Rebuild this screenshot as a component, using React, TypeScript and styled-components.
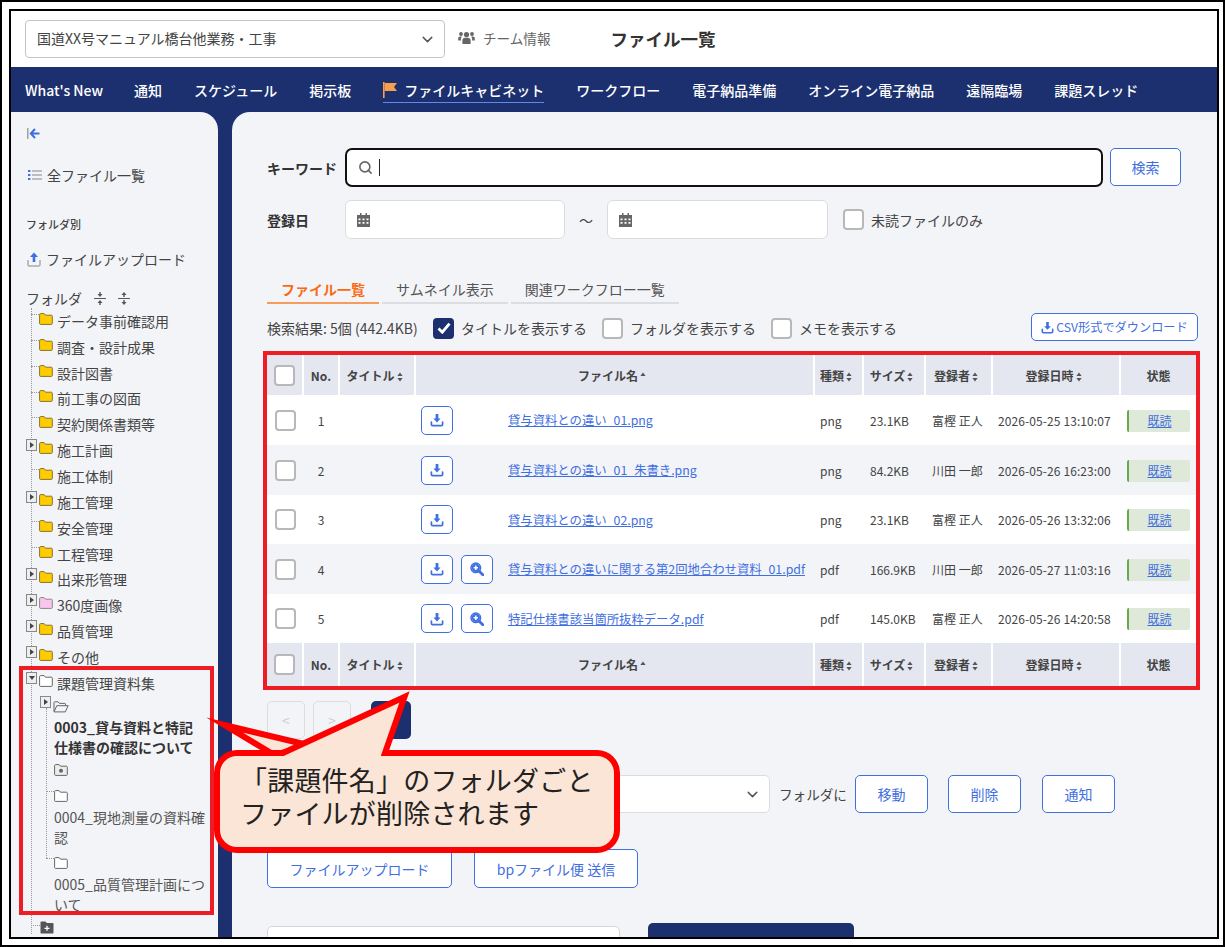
import { FC } from "react";
import styled, { createGlobalStyle } from "styled-components";
import { ChevronDown, Search } from "lucide-react";

const NAVY = "#1c3070";
const BLUE = "#3f6fe0";
const PAGE = "#f3f4f8";
const TEXT = "#444";
const RED = "#ee1c25";

const NAV_ITEMS = ["What's New", "通知", "スケジュール", "掲示板", "ファイルキャビネット", "ワークフロー", "電子納品準備", "オンライン電子納品", "遠隔臨場", "課題スレッド"];

const FOLDERS = [
  { name: "データ事前確認用" },
  { name: "調査・設計成果" },
  { name: "設計図書" },
  { name: "前工事の図面" },
  { name: "契約関係書類等" },
  { name: "施工計画", more: true },
  { name: "施工体制" },
  { name: "施工管理", more: true },
  { name: "安全管理" },
  { name: "工程管理" },
  { name: "出来形管理", more: true },
  { name: "360度画像", more: true, pink: true },
  { name: "品質管理", more: true },
  { name: "その他", more: true },
];

const FILES = [
  { no: 1, name: "貸与資料との違い_01.png", type: "png", size: "23.1KB", user: "富樫 正人", date: "2026-05-25 13:10:07" },
  { no: 2, name: "貸与資料との違い_01_朱書き.png", type: "png", size: "84.2KB", user: "川田 一郎", date: "2026-05-26 16:23:00" },
  { no: 3, name: "貸与資料との違い_02.png", type: "png", size: "23.1KB", user: "富樫 正人", date: "2026-05-26 13:32:06" },
  { no: 4, name: "貸与資料との違いに関する第2回地合わせ資料_01.pdf", type: "pdf", size: "166.9KB", user: "川田 一郎", date: "2026-05-27 11:03:16", zoom: true },
  { no: 5, name: "特記仕様書該当箇所抜粋データ.pdf", type: "pdf", size: "145.0KB", user: "富樫 正人", date: "2026-05-26 14:20:58", zoom: true },
];

const COLUMNS = [36, 36, 76, 399, 49, 62, 67, 128, 76];

const GlobalStyle = createGlobalStyle`
  html, body {
    margin: 0;
    background: #fff;
  }
  * {
    box-sizing: border-box;
  }
  body {
    font-family: "Noto Sans CJK JP", "Noto Sans", sans-serif;
    font-size: 14px;
    color: ${TEXT};
  }
`;

const FolderIcon: FC<{ fill?: string; line?: string }> = ({ fill = "#ffcc00", line = "#85742f" }) => (
  <FolderSvg viewBox="0 0 14 12">
    <path d="M1.5.6h3.6l1.3 1.6h6c.5 0 .9.4.9.9v7.4c0 .5-.4.9-.9.9H1.5c-.5 0-.9-.4-.9-.9V1.5c0-.5.4-.9.9-.9z" fill={fill} stroke={line} strokeWidth="1" />
  </FolderSvg>
);

const OpenFolderIcon: FC = () => (
  <OpenSvg viewBox="0 0 16 12">
    <path d="M1 10.5V1.5c0-.4.3-.7.7-.7h3.4l1.3 1.6h5.4c.4 0 .7.3.7.7v1.6M1 10.9l2.8-6.2h11.4l-2.9 6.2H1z" fill="none" stroke="#666" strokeWidth="1" />
  </OpenSvg>
);

const CameraFolderIcon: FC = () => (
  <FolderSvg viewBox="0 0 14 12">
    <path d="M1.5.6h3.6l1.3 1.6h6c.5 0 .9.4.9.9v7.4c0 .5-.4.9-.9.9H1.5c-.5 0-.9-.4-.9-.9V1.5c0-.5.4-.9.9-.9z" fill="#eceded" stroke="#666" strokeWidth="1" />
    <circle cx="7" cy="6.8" r="2" fill="#666" />
  </FolderSvg>
);

const AddFolderIcon: FC = () => (
  <AddSvg viewBox="0 0 14 13">
    <path d="M1.5.5h4l1.3 1.6h5.7c.6 0 1 .4 1 1v8.4c0 .6-.4 1-1 1h-11c-.6 0-1-.4-1-1V1.5c0-.6.4-1 1-1z" fill="#555" />
    <path d="M7 4.8v5M4.5 7.3h5" stroke="#fff" strokeWidth="1.3" />
  </AddSvg>
);

const DownloadIcon: FC<{ size?: number }> = ({ size = 14 }) => (
  <svg width={size} height={size} viewBox="0 0 14 14">
    <path d="M5.6 1h2.800v4.600h2.200L7 9.400 3.400 5.600h2.200z" fill="currentColor" />
    <path d="M1.400 9v2.400c0 .8.5 1.300 1.300 1.300h8.600c.8 0 1.300-.5 1.300-1.300V9" fill="none" stroke="currentColor" strokeWidth="1.7" strokeLinecap="round" />
  </svg>
);

const ZoomIcon: FC = () => (
  <svg width={14} height={14} viewBox="0 0 14 14">
    <circle cx="5.8" cy="5.8" r="4.2" fill="currentColor" />
    <circle cx="5.8" cy="5.8" r="4.8" fill="none" stroke="currentColor" strokeWidth="1.5" />
    <path d="M9.2 9.2l3.6 3.6" stroke="currentColor" strokeWidth="2.8" strokeLinecap="round" />
    <path d="M5.8 3.6v4.4M3.6 5.8h4.400" stroke="#fff" strokeWidth="1.5" />
  </svg>
);

const CalendarIcon: FC = () => (
  <svg width={13} height={14} viewBox="0 0 13 14">
    <path d="M3 0h1.500v2H3zM8.500 0H10v2H8.500z" fill="#666" />
    <path d="M0 2h13v12H0zM1.500 5.500v1.800h2V5.500zM5.500 5.500v1.800h2V5.500zM9.500 5.500v1.800h2V5.500zM1.500 9v1.800h2V9zM5.500 9v1.800h2V9zM9.500 9v1.800h2V9z" fill="#666" fillRule="evenodd" />
  </svg>
);

const SortIcon: FC<{ up?: boolean }> = ({ up }) => (
  <SortSvg viewBox="0 0 6 10">
    <path d="M3 .5L5.600 4H.4z" fill="#555" />
    {!up && <path d="M3 9.500L.4 6h5.200z" fill="#555" />}
  </SortSvg>
);

const Check: FC<{ checked?: boolean }> = ({ checked }) => (
  <CheckBox $checked={checked}>
    {checked && (
      <svg width={14} height={12} viewBox="0 0 14 12">
        <path d="M1.500 6.400l3.800 3.800L12.500 1.600" fill="none" stroke="#fff" strokeWidth="2.8" />
      </svg>
    )}
  </CheckBox>
);

const HeadRow: FC = () => (
  <tr>
    <HeadCell><Check /></HeadCell>
    <HeadCell>No.</HeadCell>
    <HeadCell>タイトル<SortIcon /></HeadCell>
    <HeadCell>ファイル名<SortIcon up /></HeadCell>
    <HeadCell>種類<SortIcon /></HeadCell>
    <HeadCell>サイズ<SortIcon /></HeadCell>
    <HeadCell>登録者<SortIcon /></HeadCell>
    <HeadCell>登録日時<SortIcon /></HeadCell>
    <HeadCell>状態</HeadCell>
  </tr>
);

export default function App() {
  return (
    <>
      <GlobalStyle />
      <OuterFrame>
        <Sheet>
          <Header>
            <ProjectSelect>
              <ProjectName>国道XX号マニュアル橋台他業務・工事</ProjectName>
              <ChevronDown size={17} color="#555" />
            </ProjectSelect>
            <TeamLink>
              <svg width={17} height={14} viewBox="0 0 17 14">
                <circle cx="8.5" cy="3.6" r="2.6" fill="#666" />
                <circle cx="3" cy="3" r="1.9" fill="#666" />
                <circle cx="14" cy="3" r="1.9" fill="#666" />
                <path d="M4.400 13V9.400c0-1.600 1.200-2.600 2.600-2.600h3c1.400 0 2.600 1 2.600 2.600V13zM.2 9.600V7.400c0-1 .8-1.800 1.800-1.800h1.800c-.6.7-.9 1.500-.9 2.500v1.500zM16.800 9.600V7.400c0-1-.8-1.800-1.800-1.800h-1.800c.6.7.9 1.500.9 2.500v1.500z" fill="#666" />
              </svg>
              チーム情報
            </TeamLink>
            <PageTitle>ファイル一覧</PageTitle>
          </Header>

          <Nav>
            {NAV_ITEMS.map(item =>
              item === "ファイルキャビネット" ? (
                <ActiveNavItem key={item}>
                  <svg width={14} height={16} viewBox="0 0 14 16">
                    <path d="M0 0h1.600v16H0z" fill="#f6a04d" />
                    <path d="M1.600 1H14l-3 4 3 4H1.600z" fill="#f6a04d" />
                  </svg>
                  {item}
                </ActiveNavItem>
              ) : (
                <NavItem key={item}>{item}</NavItem>
              )
            )}
          </Nav>

          <Body>
            <Sidebar>
              <CollapseRow>
                <svg width={13} height={11} viewBox="0 0 13 11">
                  <path d="M.8 0v11" stroke="#999" strokeWidth="1.4" />
                  <path d="M8 1L3.800 5.500 8 10M4 5.500h8.500" fill="none" stroke={BLUE} strokeWidth="2" />
                </svg>
              </CollapseRow>
              <SideLink $top={25} $left={2}>
                <svg width={14} height={12} viewBox="0 0 14 12">
                  <path d="M0 1h2.400v2H0zM0 5h2.400v2H0zM0 9h2.400v2H0z" fill={BLUE} />
                  <path d="M4 2h10M4 6h10M4 10h10" stroke="#aaa" strokeWidth="1.4" />
                </svg>
                全ファイル一覧
              </SideLink>
              <SideCaption>フォルダ別</SideCaption>
              <SideLink $top={17} $left={1}>
                <svg width={14} height={15} viewBox="0 0 14 15">
                  <path d="M7 .5L11 5H8.300v5H5.700V5H3z" fill={BLUE} />
                  <path d="M1 8v4.500c0 1 .6 1.500 1.500 1.500h9c.9 0 1.500-.5 1.500-1.500V8" fill="none" stroke="#aaa" strokeWidth="1.5" />
                </svg>
                ファイルアップロード
              </SideLink>
              <FolderHeading>
                フォルダ
                <svg width={12} height={13} viewBox="0 0 12 13">
                  <path d="M0 6.500h12" stroke="#555" />
                  <path d="M6 5L3.500 2h1.800V0h1.400v2h1.800zM6 8l2.500 3H6.700v2H5.300v-2H3.500z" fill="#555" />
                </svg>
                <svg width={12} height={13} viewBox="0 0 12 13">
                  <path d="M0 6.500h12" stroke="#555" />
                  <path d="M6 0l2.500 3H6.700v2H5.300V3H3.500zM6 13l-2.500-3h1.800V8h1.400v2h1.800z" fill="#555" />
                </svg>
              </FolderHeading>

              <Tree>
                {FOLDERS.map(folder => (
                  <TreeRow key={folder.name} $more={folder.more}>
                    {folder.more && <Expander />}
                    <FolderIcon fill={folder.pink ? "#fbc6ee" : undefined} line={folder.pink ? "#888" : undefined} />
                    {folder.name}
                  </TreeRow>
                ))}
                <IssueBox>
                  <IssueRootRow $more>
                    <Expander $open />
                    <FolderIcon fill="#fff" line="#666" />
                    課題管理資料集
                  </IssueRootRow>
                  <SubTree>
                    <SubExpanderRow>
                      <Expander />
                      <OpenFolderIcon />
                    </SubExpanderRow>
                    <IssueName $bold>0003_貸与資料と特記仕様書の確認について</IssueName>
                    <IconLine $top={6}><CameraFolderIcon /></IconLine>
                    <IconLine $top={14} $branch><FolderIcon fill="#fff" line="#666" /></IconLine>
                    <IssueName>0004_現地測量の資料確認</IssueName>
                    <IconLine $top={9} $branch><FolderIcon fill="#fff" line="#666" /></IconLine>
                    <IssueName>0005_品質管理計画について</IssueName>
                  </SubTree>
                </IssueBox>
                <AddRow><AddFolderIcon /></AddRow>
              </Tree>
            </Sidebar>

            <Main>
              <FormRow>
                <FormLabel>キーワード</FormLabel>
                <KeywordInput>
                  <Search size={15} color="#666" strokeWidth={2.5} />
                  <Caret />
                </KeywordInput>
                <SearchButton $w={71} $h={38} $left={7}>検索</SearchButton>
              </FormRow>
              <DateRow>
                <FormLabel>登録日</FormLabel>
                <DateInput $w={220}>
                  <CalendarIcon />
                </DateInput>
                <Tilde>～</Tilde>
                <DateInput $w={221}>
                  <CalendarIcon />
                </DateInput>
                <UnreadOption>
                  <Check />
                  未読ファイルのみ
                </UnreadOption>
              </DateRow>

              <Tabs>
                <Tab $active>ファイル一覧</Tab>
                <Tab>サムネイル表示</Tab>
                <Tab>関連ワークフロー一覧</Tab>
              </Tabs>

              <ResultBar>
                <ResultCount>検索結果: 5個 (442.4KB)</ResultCount>
                <ShowOption><Check checked />タイトルを表示する</ShowOption>
                <ShowOption><Check />フォルダを表示する</ShowOption>
                <ShowOption><Check />メモを表示する</ShowOption>
                <CsvButton>
                  <DownloadIcon size={13} />
                  CSV形式でダウンロード
                </CsvButton>
              </ResultBar>

              <TableFrame>
                <FileTable>
                  <colgroup>
                    {COLUMNS.map((w, i) => <Col key={i} $w={w} />)}
                  </colgroup>
                  <thead><HeadRow /></thead>
                  <tbody>
                    {FILES.map(file => (
                      <tr key={file.no}>
                        <CheckCell><Check /></CheckCell>
                        <NoCell>{file.no}</NoCell>
                        <td />
                        <td>
                          <FileCell>
                            <IconActions>
                              <IconButton><DownloadIcon /></IconButton>
                              {file.zoom && <IconButton><ZoomIcon /></IconButton>}
                            </IconActions>
                            <FileLink href="#">{file.name}</FileLink>
                          </FileCell>
                        </td>
                        <DataCell $pad={6}>{file.type}</DataCell>
                        <DataCell $pad={7}>{file.size}</DataCell>
                        <DataCell $pad={7}>{file.user}</DataCell>
                        <DateCell $pad={6}>{file.date}</DateCell>
                        <DataCell $pad={7}><ReadBadge href="#">既読</ReadBadge></DataCell>
                      </tr>
                    ))}
                  </tbody>
                  <tfoot><HeadRow /></tfoot>
                </FileTable>
              </TableFrame>

              <Pager>
                <PageButton disabled>&lt;</PageButton>
                <PageButton disabled>&gt;</PageButton>
                <CurrentPage>1</CurrentPage>
              </Pager>

              <MoveRow>
                <FolderSelect>
                  <ChevronDown size={17} color="#555" />
                </FolderSelect>
                <MoveLabel>フォルダに</MoveLabel>
                <OutlineButton $w={73} $h={38} $left={8}>移動</OutlineButton>
                <OutlineButton $w={73} $h={38} $left={20}>削除</OutlineButton>
                <OutlineButton $w={73} $h={38} $left={21}>通知</OutlineButton>
              </MoveRow>

              <UploadRow>
                <OutlineButton $w={185} $h={39}>ファイルアップロード</OutlineButton>
                <OutlineButton $w={164} $h={39} $left={22}>bpファイル便 送信</OutlineButton>
              </UploadRow>

              <BottomRow>
                <BottomInput />
                <BottomButton />
              </BottomRow>
            </Main>
          </Body>

          <Callout>
            <svg width={430} height={175} viewBox="200 685 430 175">
              <path d="M274.500 755L224.500 725L310 745.500z" fill="#fbe5d6" stroke="#f00" strokeWidth="6" strokeMiterlimit="10" />
              <path d="M237 753H283L404.500 697L385 753H597a20 20 0 0 1 20 20V830a20 20 0 0 1-20 20H237a20 20 0 0 1-20-20V773a20 20 0 0 1 20-20z" fill="#fbe5d6" stroke="#f00" strokeWidth="6" strokeMiterlimit="10" />
            </svg>
            <CalloutText>
              「課題件名」のフォルダごと
              <br />
              ファイルが削除されます
            </CalloutText>
          </Callout>
        </Sheet>
      </OuterFrame>
    </>
  );
}

const OuterFrame = styled.div`
  width: 1225px;
  height: 947px;
  padding: 7px 4px 6px 7px;
  border: 2px solid #000;
  background: #fff;
`;

const Sheet = styled.div`
  position: relative;
  display: flex;
  flex-direction: column;
  height: 100%;
  border: 2px solid #000;
  background: ${NAVY};
  overflow: hidden;
`;

const Header = styled.header`
  display: flex;
  align-items: center;
  flex: none;
  height: 56px;
  padding-left: 14px;
  background: #fff;
`;

const ProjectSelect = styled.div`
  display: flex;
  align-items: center;
  justify-content: space-between;
  width: 420px;
  height: 38px;
  padding: 0 8px 0 11px;
  font-size: 14px;
  background: #fff;
  border: 1px solid #c4c4c4;
  border-radius: 4px;
`;

const ProjectName = styled.span`
  margin-bottom: 2px;
`;

const TeamLink = styled.div`
  display: flex;
  align-items: center;
  gap: 8px;
  margin: 0 0 2px 13px;
  font-size: 13.6px;
  color: #666;
`;

const PageTitle = styled.h1`
  margin: 0 0 2px 60px;
  font-size: 17.5px;
  font-weight: 700;
  color: #333;
`;

const Nav = styled.nav`
  display: flex;
  align-items: center;
  flex: none;
  gap: 32px;
  height: 45px;
  padding-left: 14px;
`;

const NavItem = styled.span`
  font-size: 14px;
  font-weight: 500;
  line-height: 20px;
  color: #fff;

  &:first-child {
    margin-right: -1px;
  }
`;

const ActiveNavItem = styled(NavItem)`
  display: flex;
  align-items: center;
  gap: 7px;
  border-bottom: 1px solid #5d8be8;
  padding-bottom: 2px;
  margin-top: 3px;
`;

const Body = styled.div`
  display: flex;
  flex: 1;
  gap: 14px;
  min-height: 0;
`;

const Sidebar = styled.aside`
  flex: none;
  width: 207px;
  padding: 14px 0 0 15px;
  background: ${PAGE};
  border-top-right-radius: 18px;
  overflow: hidden;
`;

const CollapseRow = styled.div`
  display: flex;
  align-items: center;
  height: 14px;
  padding-left: 1px;
`;

const SideLink = styled.div<{ $top: number; $left: number }>`
  display: flex;
  align-items: center;
  gap: 5px;
  height: 20px;
  margin-top: ${p => p.$top}px;
  padding-left: ${p => p.$left}px;
  font-size: 14px;
`;

const SideCaption = styled.div`
  height: 16px;
  margin-top: 31px;
  font-size: 11px;
  font-weight: 500;
  line-height: 16px;
`;

const FolderHeading = styled.div`
  display: flex;
  align-items: center;
  gap: 12px;
  height: 20px;
  margin-top: 19px;
  font-size: 14px;
`;

const Tree = styled.div`
  position: relative;

  &::before {
    content: "";
    position: absolute;
    left: 5px;
    top: 0;
    bottom: 0;
    border-left: 1px dotted #999;
  }
`;

const TreeRow = styled.div<{ $more?: boolean }>`
  position: relative;
  display: flex;
  align-items: center;
  gap: 4px;
  height: 25.85px;
  padding-left: 13px;
  font-size: 14px;
  line-height: 20px;

  &::before {
    content: ${p => (p.$more ? "none" : '""')};
    position: absolute;
    left: 5px;
    top: 6px;
    width: 8px;
    border-top: 1px dotted #999;
  }
`;

const FolderSvg = styled.svg`
  flex: none;
  display: block;
  width: 14px;
  height: 12px;
  margin-top: -4px;
`;

const OpenSvg = styled.svg`
  flex: none;
  display: block;
  width: 16px;
  height: 12px;
`;

const AddSvg = styled.svg`
  display: block;
  width: 14px;
  height: 13px;
`;

const Expander = styled.span<{ $open?: boolean }>`
  position: absolute;
  left: 0;
  top: 2px;
  z-index: 1;
  display: flex;
  align-items: center;
  justify-content: center;
  width: 11px;
  height: 12px;
  background: #eee;
  border: 1px solid #888;

  &::after {
    content: "";
    border-style: solid;
    border-color: transparent;
    ${p =>
      p.$open
        ? "border-width: 4px 3px 0 3px; border-top-color: #444;"
        : "border-width: 3px 0 3px 4px; border-left-color: #444;"}
  }
`;

const IssueBox = styled.div`
  position: relative;
  width: 187px;
  height: 241px;
  margin: 2px 0 0 -3px;
  padding-left: 3px;
  outline: 4px solid ${RED};
`;

const IssueRootRow = styled(TreeRow)`
  margin-top: -2px;
`;

const SubTree = styled.div`
  position: relative;
  padding-left: 28px;

  &::before {
    content: "";
    position: absolute;
    left: 20px;
    top: 12px;
    height: 150px;
    border-left: 1px dotted #999;
  }
`;

const SubExpanderRow = styled.div`
  position: relative;
  display: flex;
  align-items: flex-end;
  height: 17px;
  margin-left: -1px;

  & ${Expander} {
    left: -13px;
    top: 0;
  }
`;

const IssueName = styled.div<{ $bold?: boolean }>`
  width: 152px;
  margin-top: ${p => (p.$bold ? 4 : 5)}px;
  font-size: 14px;
  font-weight: ${p => (p.$bold ? 700 : 400)};
  line-height: 20.5px;
  color: ${p => (p.$bold ? "#333" : "#555")};
`;

const IconLine = styled.div<{ $top: number; $branch?: boolean }>`
  position: relative;
  height: 12px;
  margin-top: ${p => p.$top}px;

  & ${FolderSvg} {
    margin-top: 0;
  }

  &::before {
    content: ${p => (p.$branch ? '""' : "none")};
    position: absolute;
    left: -8px;
    top: 1px;
    width: 8px;
    border-top: 1px dotted #999;
  }
`;

const AddRow = styled.div`
  position: relative;
  margin-top: 10px;
  padding-left: 14px;

  &::before {
    content: "";
    position: absolute;
    left: 5px;
    top: 4px;
    width: 9px;
    border-top: 1px dotted #999;
  }
`;

const Main = styled.main`
  flex: 1;
  min-width: 0;
  padding: 36px 21px 0 35px;
  background: ${PAGE};
  border-top-left-radius: 18px;
  overflow: hidden;
`;

const FormRow = styled.div`
  display: flex;
  align-items: center;
`;

const DateRow = styled(FormRow)`
  margin-top: 13px;
`;

const FormLabel = styled.label`
  flex: none;
  width: 78px;
  font-size: 14px;
  font-weight: 700;
  color: #333;
`;

const KeywordInput = styled.div`
  display: flex;
  align-items: center;
  gap: 6px;
  width: 758px;
  height: 39px;
  padding-left: 11px;
  background: #fff;
  border: 2px solid #111;
  border-radius: 7px;
`;

const Caret = styled.span`
  width: 1px;
  height: 17px;
  background: #222;
`;

const OutlineButton = styled.button<{ $w: number; $h: number; $left?: number }>`
  flex: none;
  width: ${p => p.$w}px;
  height: ${p => p.$h}px;
  margin-left: ${p => p.$left ?? 0}px;
  padding: 0;
  font-family: inherit;
  font-size: 14px;
  color: ${BLUE};
  background: #fff;
  border: 1px solid ${BLUE};
  border-radius: 5px;
`;

const SearchButton = styled(OutlineButton)`
  align-self: flex-start;
`;

const DateInput = styled.div<{ $w: number }>`
  display: flex;
  align-items: center;
  width: ${p => p.$w}px;
  height: 39px;
  padding-left: 11px;
  background: #fff;
  border: 1px solid #dcdcdc;
  border-radius: 6px;
`;

const Tilde = styled.span`
  width: 42px;
  text-align: center;
  font-size: 14px;
`;

const UnreadOption = styled.div`
  display: flex;
  align-items: center;
  gap: 7px;
  margin-left: 15px;
  font-size: 14px;
`;

const CheckBox = styled.span<{ $checked?: boolean }>`
  flex: none;
  display: inline-flex;
  align-items: center;
  justify-content: center;
  width: 21px;
  height: 21px;
  background: ${p => (p.$checked ? NAVY : "#fff")};
  border: 2px solid ${p => (p.$checked ? NAVY : "#b8b8b8")};
  border-radius: 4px;
`;

const Tabs = styled.div`
  display: flex;
  gap: 3px;
  margin-top: 39px;
`;

const Tab = styled.div<{ $active?: boolean }>`
  height: 26px;
  padding: 0 14px;
  font-size: 14px;
  font-weight: ${p => (p.$active ? 700 : 400)};
  line-height: 23px;
  color: ${p => (p.$active ? "#fa6a14" : "#555")};
  border-bottom: 2px solid ${p => (p.$active ? "#f79a5e" : "#dcdde2")};
`;

const ResultBar = styled.div`
  display: flex;
  align-items: center;
  height: 28px;
  margin-top: 9px;
`;

const ResultCount = styled.span`
  width: 166px;
  margin-top: 2px;
  font-size: 14px;
  white-space: nowrap;
`;

const ShowOption = styled.span`
  display: flex;
  align-items: center;
  gap: 7px;
  margin: 2px 15px 0 0;
  font-size: 14px;
`;

const CsvButton = styled.button`
  display: flex;
  align-items: center;
  justify-content: center;
  gap: 2px;
  width: 167px;
  height: 28px;
  margin-left: auto;
  margin-right: -2px;
  padding: 0;
  font-family: inherit;
  font-size: 12.2px;
  color: ${BLUE};
  background: #fff;
  border: 1px solid ${BLUE};
  border-radius: 5px;
`;

const TableFrame = styled.div`
  margin-top: 14px;
  outline: 4px solid ${RED};
`;

const FileTable = styled.table`
  width: 929px;
  table-layout: fixed;
  border-collapse: collapse;
  font-size: 12px;

  & tbody tr {
    height: 50px;
  }
  & tbody tr:nth-child(odd) {
    background: #fff;
  }
  & tbody tr:nth-child(3),
  & tbody tr:nth-child(5) {
    height: 49px;
  }
  & thead tr {
    height: 40px;
  }
  & tfoot tr {
    height: 43px;
  }
  & td {
    padding: 0;
  }
`;

const Col = styled.col<{ $w: number }>`
  width: ${p => p.$w}px;
`;

const HeadCell = styled.th`
  padding: 0;
  font-size: 12px;
  font-weight: 700;
  color: #444;
  text-align: center;
  background: #e4e7f0;
  border-left: 2px solid #fff;

  &:first-child {
    border-left: 0;
  }
  & ${CheckBox} {
    vertical-align: middle;
  }
`;

const SortSvg = styled.svg`
  width: 6px;
  height: 10px;
  margin: 0 5px 0 2px;
  vertical-align: -1px;
`;

const CheckCell = styled.td`
  text-align: center;

  & ${CheckBox} {
    vertical-align: middle;
  }
`;

const NoCell = styled.td`
  text-align: center;
`;

const FileCell = styled.div`
  display: flex;
  align-items: center;
  padding-left: 6px;
`;

const IconActions = styled.div`
  display: flex;
  gap: 8px;
  width: 87px;
`;

const IconButton = styled.button`
  display: flex;
  align-items: center;
  justify-content: center;
  width: 32px;
  height: 29px;
  padding: 0;
  color: ${BLUE};
  background: #fff;
  border: 1px solid ${BLUE};
  border-radius: 5px;
`;

const FileLink = styled.a`
  font-size: 12.35px;
  color: ${BLUE};
  white-space: nowrap;
`;

const DataCell = styled.td<{ $pad: number }>`
  && {
    padding-left: ${p => p.$pad}px;
  }
  white-space: nowrap;
`;

const DateCell = styled(DataCell)`
  letter-spacing: 0.1px;
`;

const ReadBadge = styled.a`
  display: block;
  width: 63px;
  height: 22px;
  margin-top: 1px;
  font-size: 12px;
  line-height: 22px;
  text-align: center;
  color: ${BLUE};
  background: #dfe9da;
  border-left: 2px solid #6aa84f;
  border-radius: 2px;
`;

const Pager = styled.div`
  display: flex;
  gap: 8px;
  margin-top: 15px;
`;

const PageButton = styled.button`
  width: 38px;
  height: 38px;
  padding: 0;
  font-family: inherit;
  font-size: 14px;
  color: #ccc;
  background: ${PAGE};
  border: 1px solid #ddd;
  border-radius: 5px;
`;

const CurrentPage = styled.button`
  width: 40px;
  height: 38px;
  margin-left: 12px;
  padding: 0;
  color: #fff;
  background: ${NAVY};
  border: 0;
  border-radius: 5px;
`;

const MoveRow = styled.div`
  display: flex;
  align-items: center;
  margin-top: 36px;
`;

const FolderSelect = styled.div`
  display: flex;
  align-items: center;
  justify-content: flex-end;
  width: 503px;
  height: 38px;
  padding-right: 8px;
  background: #fff;
  border: 1px solid #dcdcdc;
  border-radius: 5px;
`;

const MoveLabel = styled.span`
  margin-left: 9px;
  font-size: 13.6px;
`;

const UploadRow = styled.div`
  display: flex;
  margin-top: 36px;
`;

const BottomRow = styled.div`
  display: flex;
  align-items: flex-start;
  gap: 28px;
  margin-top: 35px;
`;

const BottomInput = styled.div`
  width: 353px;
  height: 40px;
  margin-top: 3px;
  background: #fff;
  border: 1px solid #d6d6d6;
  border-radius: 5px;
`;

const BottomButton = styled.div`
  width: 206px;
  height: 40px;
  background: ${NAVY};
  border-radius: 5px;
`;

const Callout = styled.div`
  position: absolute;
  left: 189px;
  top: 674px;
  width: 430px;
  height: 175px;

  & svg {
    display: block;
  }
`;

const CalloutText = styled.div`
  position: absolute;
  left: 40px;
  top: 78px;
  font-size: 27px;
  letter-spacing: 0.2px;
  line-height: 33px;
  color: #222;
  white-space: nowrap;
`;
